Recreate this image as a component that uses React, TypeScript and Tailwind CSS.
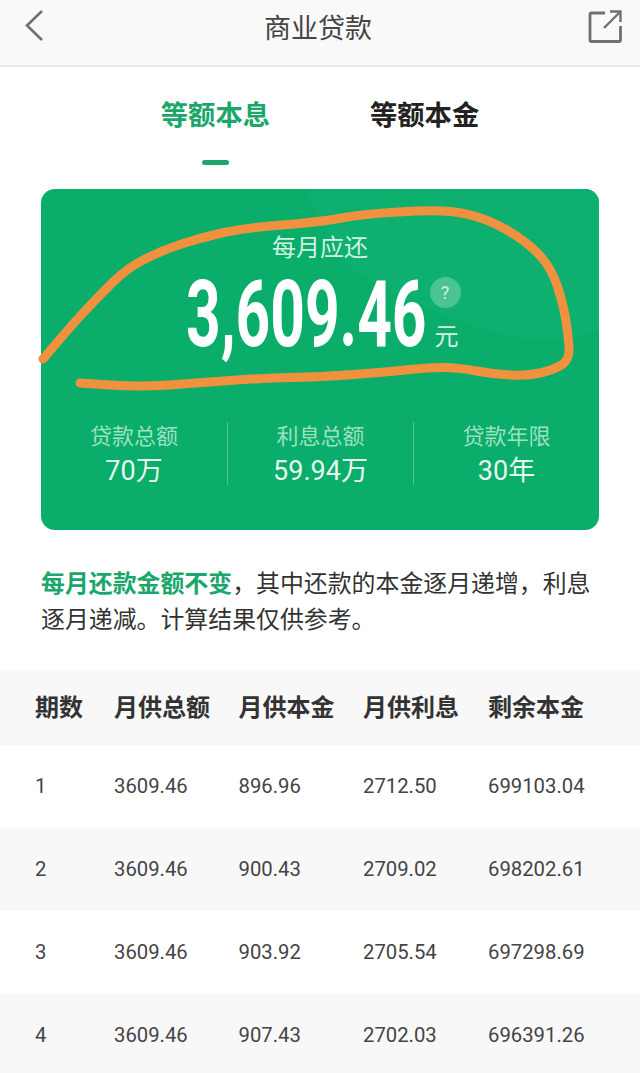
const rows = [
  ["1", "3609.46", "896.96", "2712.50", "699103.04"],
  ["2", "3609.46", "900.43", "2709.02", "698202.61"],
  ["3", "3609.46", "903.92", "2705.54", "697298.69"],
  ["4", "3609.46", "907.43", "2702.03", "696391.26"],
];
const heads = ["期数", "月供总额", "月供本金", "月供利息", "剩余本金"];
const stats = [
  ["贷款总额", "70万"],
  ["利息总额", "59.94万"],
  ["贷款年限", "30年"],
];
const cols = "grid grid-cols-[79px_124.5px_124.5px_125px_1fr] pl-[35px]";

// hand drawn marker line, traced from the picture (coords are relative to the card)
const marker = [
  [2, 170], [29, 138], [56, 109], [86, 79], [122, 61], [159, 49], [202, 39], [279, 33], [322, 25], [392, 21],
  [426, 24], [459, 36], [492, 58], [511, 81], [522, 114], [527, 144], [529, 171], [512, 181], [486, 187],
  [452, 185], [419, 179], [392, 178], [346, 183], [279, 188], [222, 189], [156, 194], [99, 198], [39, 194],
];
const markerPath = marker.reduce((d, [x, y], i) => {
  if (i === 0) return `M${x} ${y}`;
  if (i === marker.length - 1) return `${d}L${x} ${y}`;
  const [nx, ny] = marker[i + 1];
  return `${d}Q${x} ${y} ${(x + nx) / 2} ${(y + ny) / 2}`;
}, "");

export default function App() {
  return (
    <div className="w-[640px] h-[1073px] overflow-hidden bg-white font-['Roboto','Noto_Sans_CJK_SC',sans-serif]">
      <header className="h-[67px] bg-[#f9f9f9] border-b-2 border-[#ebebeb] flex items-center justify-between pl-[24px] pr-[18px]">
        <svg width="20" height="32" viewBox="0 0 20 32" fill="none" stroke="#707070" strokeWidth="2.6" className="-mt-[15px]">
          <path d="M18 2 3 16.5 18 31" />
        </svg>
        <h1 className="text-[27px] text-[#444444] leading-none -mt-[7px] ml-[4px]">商业贷款</h1>
        <svg width="34" height="34" viewBox="0 0 34 34" fill="none" stroke="#707070" strokeWidth="3" className="-mt-[14px]">
          <path d="M17 4H3.500A1.500 1.500 0 0 0 2 5.500V31a1.500 1.500 0 0 0 1.500 1.500H31A1.500 1.500 0 0 0 32.500 31V17" strokeWidth="2.800" />
          <path d="M16 19 32 3M22 2.500h10.500V13" strokeWidth="2.400" />
        </svg>
      </header>

      <div className="flex justify-center gap-[100px] pt-[29px] h-[122px] text-[27.300px] font-bold leading-[40px]">
        <div className="flex flex-col items-center text-[#1ba76c]">
          <span>等额本息</span>
          <span className="w-[27px] h-[5px] mt-[24px] rounded-full bg-[#1ba76c]" />
        </div>
        <span className="text-[#222222]">等额本金</span>
      </div>

      <section className="relative mx-[41px] h-[341px] rounded-[14px] bg-[#0aad69] flex flex-col items-center">
        <svg width="558" height="341" viewBox="0 0 558 341" className="absolute inset-0 rounded-[14px]">
          <path d="M266 0C280 40 295 65 309 78C340 100 390 125 446 141C480 152 520 156 558 141V0Z" fill="#0db06e" />
        </svg>
        <p className="relative mt-[42px] text-[24px] leading-[34px] text-[#d3f1e3]">每月应还</p>
        <div className="relative flex mt-[7px] ml-[2px] h-[100px] w-[271px]">
          <div className="w-[249px] shrink-0 pt-[1px] text-[93px] leading-[84px] font-bold text-white scale-x-[0.65] origin-left whitespace-nowrap">3,609.46</div>
          <div className="flex flex-col items-start">
            <span className="w-[31px] h-[31px] mt-[5px] -ml-[5px] rounded-full bg-white/25 text-[#d3f1e3] text-[18px] flex items-center justify-center">?</span>
            <span className="mt-[14px] text-[24px] leading-[30px] text-[#d3f1e3]">元</span>
          </div>
        </div>
        <div className="relative mt-[50px] w-full grid grid-cols-3">
          {stats.map(([label, value], i) => (
            <div key={label} className={`flex flex-col items-center h-[63px] ${i > 0 ? "border-l border-[#4fc594]" : ""}`}>
              <span className="text-[22px] leading-[30px] text-[#9fe0c2]">{label}</span>
              <span className="text-[27px] leading-[36px] text-[#e6f7ef] mt-[1px]">{value}</span>
            </div>
          ))}
        </div>
        <svg width="558" height="341" viewBox="0 0 558 341" fill="none" className="absolute inset-0 overflow-visible">
          <path d={markerPath} stroke="#f0913f" strokeWidth="9" strokeLinecap="round" strokeLinejoin="round" />
        </svg>
      </section>

      <p className="mx-[41px] mt-[36px] text-[23.900px] leading-[36px] text-[#333333]">
        <b className="text-[#1ba76c]">每月还款金额不变</b>，其中还款的本金逐月递增，利息逐月递减。计算结果仅供参考。
      </p>

      <div className="mt-[32px]">
        <div className={`${cols} h-[75px] items-center bg-[#f8f8f8] text-[24px] font-bold text-[#333333]`}>
          {heads.map((h) => (
            <span key={h}>{h}</span>
          ))}
        </div>
        {rows.map((row, i) => (
          <div key={row[0]} className={`${cols} h-[83px] items-center text-[20.300px] text-[#444444] ${i % 2 === 1 ? "bg-[#f8f8f8]" : "bg-white"}`}>
            {row.map((c, j) => (
              <span key={j} className="-mt-[1px]">{c}</span>
            ))}
          </div>
        ))}
      </div>
    </div>
  );
}
